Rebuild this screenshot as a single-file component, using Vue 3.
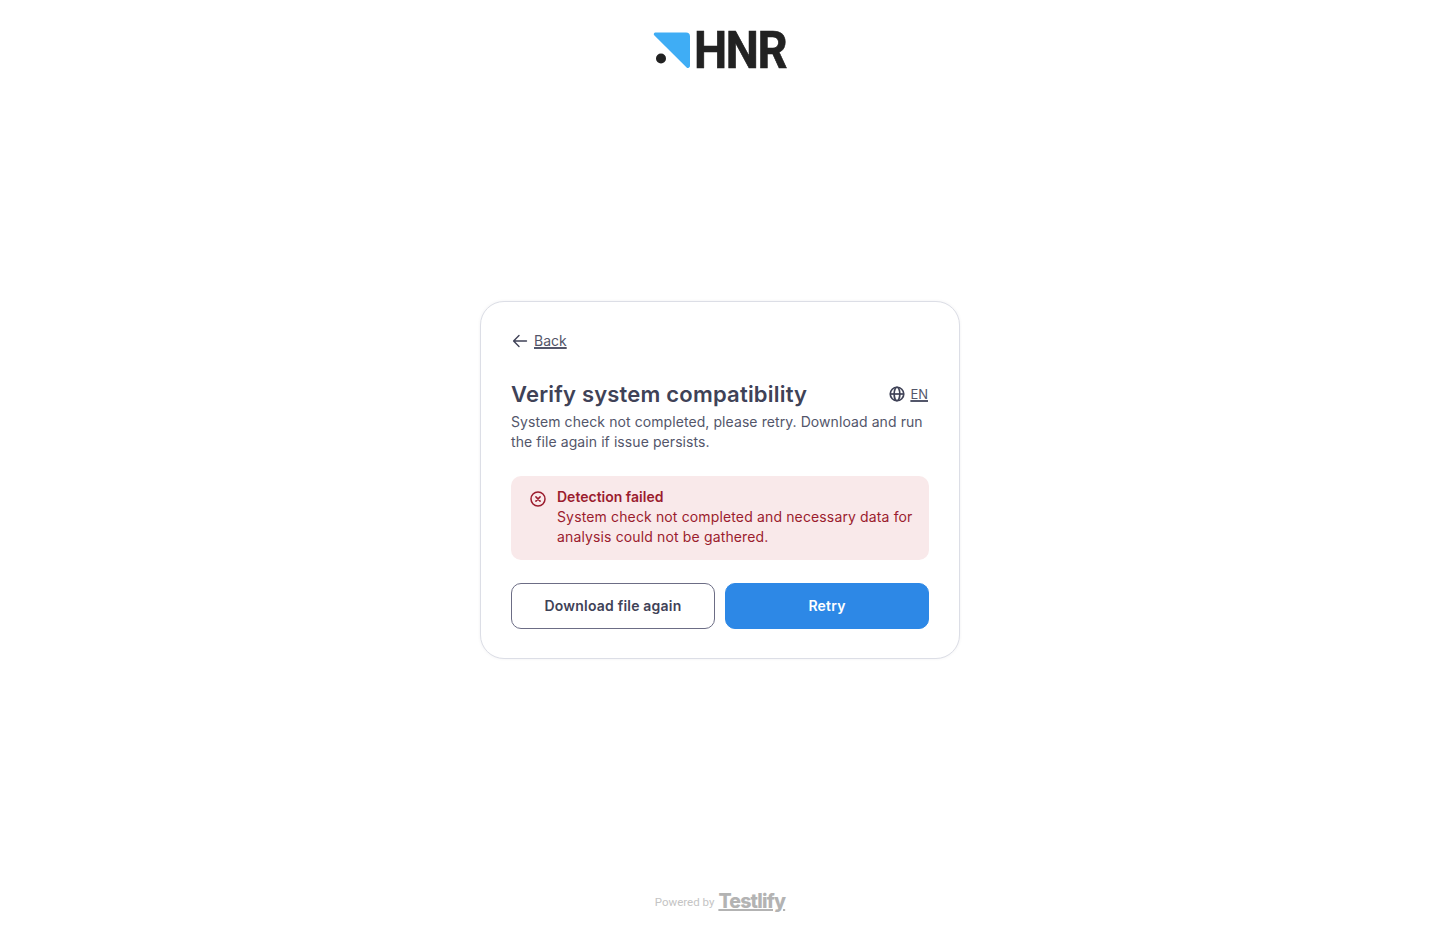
<template>
  <div class="page">
    <header class="top">
      <div class="logo">
        <svg class="logo-mark" width="38" height="38" viewBox="0 0 38 38">
          <path d="M2.5 1.5H33a4 4 0 0 1 4 4V35a2 2 0 0 1-3.4 1.4L1.2 4.2A1.6 1.6 0 0 1 2.5 1.5Z" fill="#3fadf5" />
          <circle cx="8" cy="27.5" r="5" fill="#222" />
        </svg>
        <span class="logo-text">HNR</span>
      </div>
    </header>

    <main class="middle">
      <section class="card">
        <a class="back" href="#">
          <svg width="18" height="18" viewBox="0 0 18 18" fill="none" stroke="#3f4257" stroke-width="1.4" stroke-linecap="round" stroke-linejoin="round">
            <path d="M15.5 9H2.8M8 3.6 2.6 9 8 14.4" />
          </svg>
          <span>Back</span>
        </a>

        <div class="title-row">
          <h1>Verify system compatibility</h1>
          <a class="lang" href="#">
            <svg width="16" height="16" viewBox="0 0 18 18" fill="none" stroke="#3f4257" stroke-width="1.9">
              <circle cx="9" cy="9" r="7.6" />
              <ellipse cx="9" cy="9" rx="3.2" ry="7.6" />
              <path d="M1.4 9h15.2" />
            </svg>
            <span>EN</span>
          </a>
        </div>
        <p class="intro">System check not completed, please retry. Download and run the file again if issue persists.</p>

        <div class="alert">
          <svg class="alert-icon" width="18" height="18" viewBox="0 0 18 18" fill="none" stroke="#9b1c2e" stroke-width="1.5" stroke-linecap="round">
            <circle cx="9" cy="9" r="7" />
            <path d="M6.9 6.9l4.2 4.2M11.1 6.9l-4.2 4.2" />
          </svg>
          <div class="alert-body">
            <strong>Detection failed</strong>
            <p>System check not completed and necessary data for analysis could not be gathered.</p>
          </div>
        </div>

        <div class="actions">
          <button class="btn btn-outline">Download file again</button>
          <button class="btn btn-primary">Retry</button>
        </div>
      </section>
    </main>

    <footer class="bottom">
      <span class="powered">Powered by</span>
      <span class="brand">Testlify</span>
    </footer>
  </div>
</template>

<script setup>
</script>

<style>
html, body {
  margin: 0;
  background: #fff;
}
</style>

<style scoped>
.page {
  height: 943px;
  display: flex;
  flex-direction: column;
  font-family: Inter, "Open Sans", sans-serif;
  color: #3f4257;
}

.top {
  height: 100px;
  display: flex;
  justify-content: center;
  padding-top: 30px;
  box-sizing: border-box;
}

.logo {
  display: flex;
  align-items: flex-start;
  gap: 3px;
  height: 40px;
}

.logo-mark {
  margin-top: 1px;
}

.logo-text {
  font-family: Roboto, sans-serif;
  font-weight: 700;
  font-size: 51px;
  line-height: 40px;
  letter-spacing: -1.5px;
  color: #222;
  -webkit-text-stroke: 0.6px #222;
  transform: scaleX(0.92);
  transform-origin: left top;
  margin-right: -8px;
  margin-top: 1px;
}

.middle {
  flex: 1;
  display: flex;
  align-items: center;
  justify-content: center;
}

.card {
  width: 480px;
  height: 358px;
  box-sizing: border-box;
  padding: 28px 30px 30px;
  background: #fff;
  border: 1px solid #dcdee6;
  border-radius: 24px;
  box-shadow: 0 0 3px rgba(60, 65, 90, 0.08);
}

.back {
  display: inline-flex;
  align-items: center;
  gap: 5px;
  height: 20px;
  font-size: 14px;
  color: #53566a;
}

.back svg {
  margin-top: 2px;
}

.back span,
.lang span {
  text-decoration: underline;
  text-underline-offset: 2px;
}

.title-row {
  margin-top: 25px;
  display: flex;
  align-items: center;
  justify-content: space-between;
}

h1 {
  margin: 0;
  font-size: 22px;
  line-height: 30px;
  font-weight: 600;
  letter-spacing: 0.2px;
  color: #3f4257;
}

.lang {
  display: inline-flex;
  align-items: center;
  gap: 5px;
  margin-right: 1px;
  font-size: 13px;
  color: #53566a;
}

.intro {
  margin: 3px 0 0;
  font-size: 14px;
  line-height: 20px;
  letter-spacing: 0.08px;
  color: #53566a;
}

.alert {
  margin-top: 24px;
  height: 84px;
  box-sizing: border-box;
  padding: 11px 12px 11px 18px;
  display: flex;
  gap: 10px;
  background: #f9e9ea;
  border-radius: 10px;
  color: #9b1c2e;
}

.alert-icon {
  flex: none;
  margin-top: 3px;
}

.alert-body strong {
  display: block;
  font-size: 14px;
  line-height: 20px;
  font-weight: 600;
}

.alert-body p {
  margin: 0;
  font-size: 14px;
  line-height: 20px;
  letter-spacing: 0.14px;
}

.actions {
  margin-top: 23px;
  display: grid;
  grid-template-columns: 1fr 1fr;
  gap: 10px;
}

.btn {
  height: 46px;
  padding-bottom: 3px;
  border-radius: 10px;
  font-family: inherit;
  font-size: 14px;
  font-weight: 600;
  letter-spacing: 0.2px;
  cursor: pointer;
}

.btn-outline {
  background: #fff;
  border: 1px solid #6c6d85;
  color: #3f4257;
}

.btn-primary {
  background: #2d88e6;
  border: 1px solid #2d88e6;
  color: #fff;
}

.bottom {
  height: 83px;
  display: flex;
  align-items: flex-start;
  justify-content: center;
  gap: 4px;
  padding-top: 31px;
  box-sizing: border-box;
}

.powered {
  font-family: Roboto, sans-serif;
  font-size: 11.5px;
  line-height: 20px;
  margin-top: 1px;
  color: #c4c4c4;
}

.brand {
  font-size: 19.5px;
  line-height: 20px;
  font-weight: 800;
  letter-spacing: -0.8px;
  color: #b3b3b3;
  text-decoration: underline;
  text-decoration-thickness: 2px;
  text-underline-offset: 1px;
}
</style>
